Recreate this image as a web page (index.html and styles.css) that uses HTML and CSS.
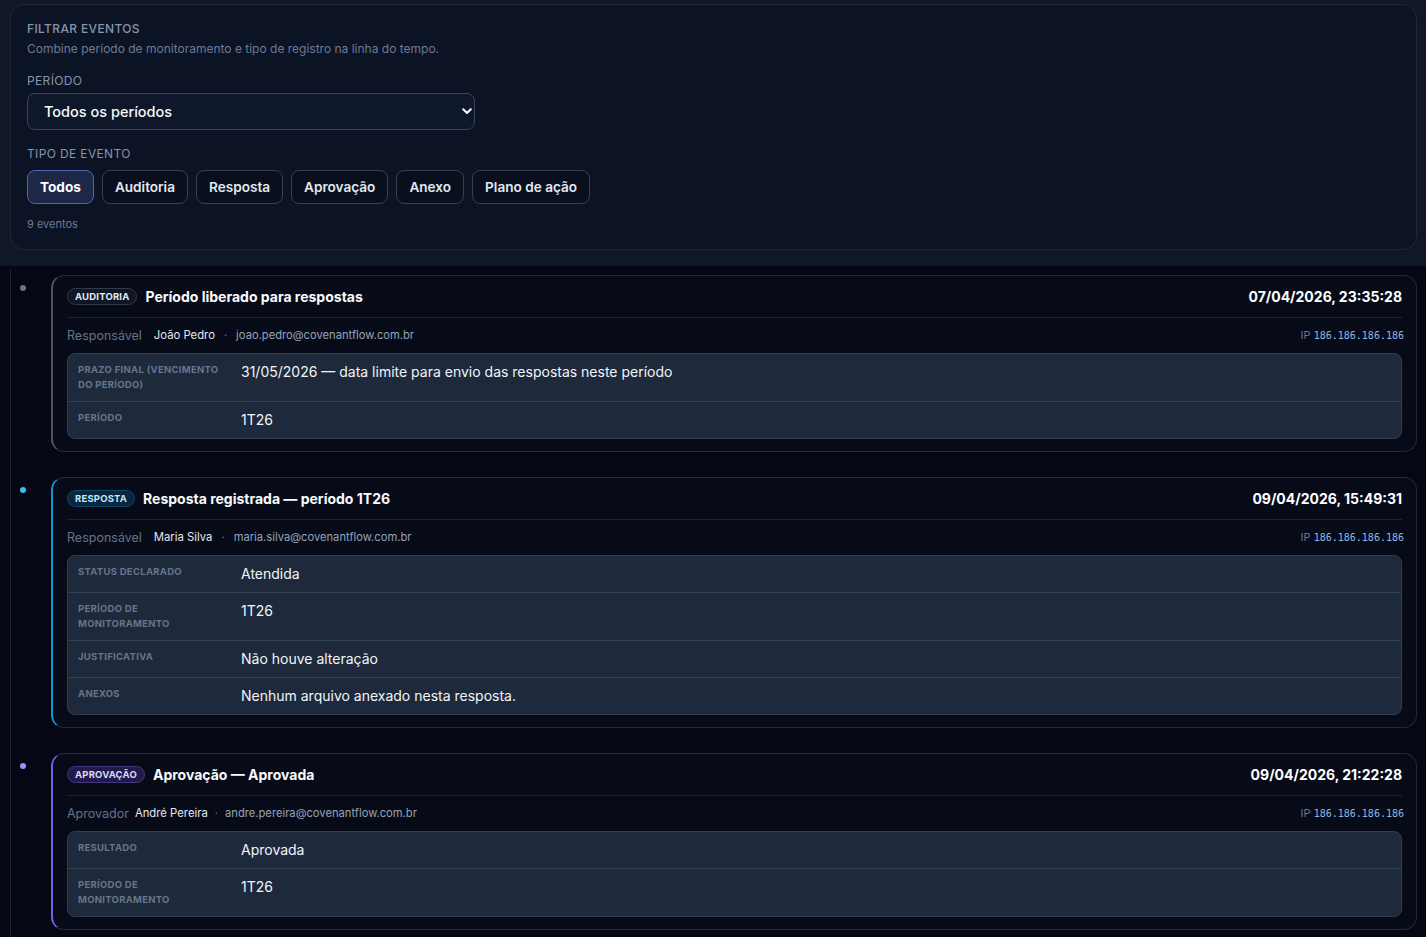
FILE: index.html
```html
<!DOCTYPE html>
<html lang="pt-BR">
<head>
<meta charset="utf-8">
<title>Linha do tempo</title>
<link rel="stylesheet" href="styles.css">
</head>
<body>
<header class="top">
  <section class="filters">
    <h2 class="f-title">Filtrar eventos</h2>
    <p class="f-sub">Combine período de monitoramento e tipo de registro na linha do tempo.</p>
    <label class="f-label">Período</label>
    <div class="select-wrap">
      <select class="select">
        <option>Todos os períodos</option>
      </select>
      <svg class="chev" width="10" height="7" viewBox="0 0 10 7"><path d="M1.2 1.3 L5 5 L8.8 1.3" fill="none" stroke="#ffffff" stroke-width="2" stroke-linecap="round" stroke-linejoin="round"/></svg>
    </div>
    <div class="f-label f-label2">Tipo de evento</div>
    <div class="chips">
      <button class="chip active">Todos</button>
      <button class="chip">Auditoria</button>
      <button class="chip">Resposta</button>
      <button class="chip">Aprovação</button>
      <button class="chip">Anexo</button>
      <button class="chip">Plano de ação</button>
    </div>
    <div class="count">9 eventos</div>
  </section>
</header>

<main class="timeline">
  <article class="card c-audit">
    <span class="dot"></span>
    <div class="card-head">
      <div class="head-left">
        <span class="badge b-audit">AUDITORIA</span>
        <h3 class="title">Período liberado para respostas</h3>
      </div>
      <div class="stamp">07/04/2026, 23:35:28</div>
    </div>
    <div class="meta">
      <div class="meta-left">
        <span class="m-label">Responsável</span>
        <span class="m-name">João Pedro</span>
        <span class="m-sep">·</span>
        <span class="m-mail">joao.pedro@covenantflow.com.br</span>
      </div>
      <div class="ip"><span class="ip-l">IP</span> <span class="ip-v">186.186.186.186</span></div>
    </div>
    <div class="details">
      <div class="row"><div class="k">Prazo final (vencimento do período)</div><div class="v">31/05/2026 — data limite para envio das respostas neste período</div></div>
      <div class="row"><div class="k">Período</div><div class="v">1T26</div></div>
    </div>
  </article>

  <article class="card c-resp">
    <span class="dot"></span>
    <div class="card-head">
      <div class="head-left">
        <span class="badge b-resp">RESPOSTA</span>
        <h3 class="title">Resposta registrada — período 1T26</h3>
      </div>
      <div class="stamp">09/04/2026, 15:49:31</div>
    </div>
    <div class="meta">
      <div class="meta-left">
        <span class="m-label">Responsável</span>
        <span class="m-name">Maria Silva</span>
        <span class="m-sep">·</span>
        <span class="m-mail">maria.silva@covenantflow.com.br</span>
      </div>
      <div class="ip"><span class="ip-l">IP</span> <span class="ip-v">186.186.186.186</span></div>
    </div>
    <div class="details">
      <div class="row"><div class="k">Status declarado</div><div class="v">Atendida</div></div>
      <div class="row"><div class="k">Período de monitoramento</div><div class="v">1T26</div></div>
      <div class="row"><div class="k">Justificativa</div><div class="v">Não houve alteração</div></div>
      <div class="row"><div class="k">Anexos</div><div class="v">Nenhum arquivo anexado nesta resposta.</div></div>
    </div>
  </article>

  <article class="card c-apr">
    <span class="dot"></span>
    <div class="card-head">
      <div class="head-left">
        <span class="badge b-apr">APROVAÇÃO</span>
        <h3 class="title">Aprovação — Aprovada</h3>
      </div>
      <div class="stamp">09/04/2026, 21:22:28</div>
    </div>
    <div class="meta">
      <div class="meta-left tight">
        <span class="m-label">Aprovador</span>
        <span class="m-name">André Pereira</span>
        <span class="m-sep">·</span>
        <span class="m-mail">andre.pereira@covenantflow.com.br</span>
      </div>
      <div class="ip"><span class="ip-l">IP</span> <span class="ip-v">186.186.186.186</span></div>
    </div>
    <div class="details">
      <div class="row"><div class="k">Resultado</div><div class="v">Aprovada</div></div>
      <div class="row"><div class="k">Período de monitoramento</div><div class="v">1T26</div></div>
    </div>
  </article>
</main>
</body>
</html>
```

FILE: styles.css
```css
* { box-sizing: border-box; }
html, body { margin: 0; padding: 0; }
body {
  background: #050814;
  font-family: Inter, "Noto Sans", sans-serif;
  color: #e2e8f0;
  height: 937px;
  overflow: hidden;
}

/* ---------- header / filters ---------- */
.top {
  background: #101726;
  padding: 4px 9px 16px 10px;
}
.filters {
  background: #0c1324;
  border: 1px solid #1e2838;
  border-radius: 14px;
  padding: 16px 16px 17px 16px;
}
.f-title {
  margin: 0;
  font-size: 12px;
  font-weight: 500;
  line-height: 16px;
  letter-spacing: 0.03em;
  text-transform: uppercase;
  color: #8595ae;
}
.f-sub {
  margin: 4px 0 0;
  font-size: 12px;
  line-height: 16px;
  color: #6b7c98;
}
.f-label {
  display: block;
  margin-top: 16px;
  font-size: 12px;
  line-height: 16px;
  letter-spacing: 0.03em;
  text-transform: uppercase;
  color: #8595ae;
}
.f-label2 { margin-top: 16px; }
.select-wrap {
  position: relative;
  width: 448px;
  margin-top: 4px;
}
.select {
  -webkit-appearance: none;
  appearance: none;
  display: block;
  width: 100%;
  height: 37px;
  background: #0f172a;
  border: 1px solid #3a4558;
  border-radius: 8px;
  color: #f8fafc;
  font-family: inherit;
  font-size: 14.5px;
  font-weight: 500;
  padding: 0 30px 0 16px;
}
.chev {
  position: absolute;
  right: 3px;
  top: 15px;
}
.chips {
  display: flex;
  gap: 8px;
  margin-top: 8px;
}
.chip {
  height: 34px;
  padding: 0 12px;
  border-radius: 8px;
  border: 1px solid #334155;
  background: #0a0f1d;
  color: #e2e8f0;
  font-family: inherit;
  font-size: 13.6px;
  font-weight: 600;
}
.chip.active {
  background: #1d2849;
  border-color: #5466a8;
  color: #ffffff;
  font-weight: 700;
}
.count {
  margin-top: 12px;
  font-size: 11px;
  line-height: 16px;
  color: #6b7c98;
}

/* ---------- timeline ---------- */
.timeline {
  margin: 4px 9px 0 10px;
  padding: 5px 0 30px 40px;
  border-left: 1px solid #1c2434;
  display: flex;
  flex-direction: column;
  gap: 25px;
}
.card {
  position: relative;
  background: #070b18;
  border: 1px solid #202a3a;
  border-left: 2px solid #4a5568;
  border-radius: 13px;
  padding: 11px 14px 12px 14px;
}
.c-resp { border-left-color: #1493d6; }
.c-apr { border-left-color: #7c5ce6; }
.dot {
  position: absolute;
  left: -33px;
  top: 9px;
  width: 6px;
  height: 6px;
  border-radius: 50%;
  background: #64748b;
}
.c-resp .dot { background: #38bdf8; }
.c-apr .dot { background: #a78bfa; }

.card-head {
  display: flex;
  justify-content: space-between;
  align-items: center;
  height: 31px;
  padding-bottom: 11px;
  border-bottom: 1px solid #1c2434;
}
.head-left {
  display: flex;
  align-items: center;
  gap: 8px;
}
.badge {
  display: inline-block;
  height: 17px;
  line-height: 15px;
  padding: 0 7px;
  border-radius: 9px;
  border: 1px solid #2e3a4e;
  background: #0f1626;
  font-size: 9.5px;
  font-weight: 700;
  letter-spacing: 0.02em;
  color: #e2e8f0;
}
.b-resp { background: #0a2640; border-color: #0f4669; color: #bde7fb; }
.b-apr { background: #221a48; border-color: #43357f; color: #ddd6fe; }
.title {
  margin: 0;
  font-size: 14px;
  font-weight: 700;
  line-height: 18px;
  color: #f8fafc;
}
.stamp {
  font-size: 14px;
  font-weight: 700;
  line-height: 18px;
  color: #ffffff;
}

.meta {
  display: flex;
  justify-content: space-between;
  align-items: center;
  margin: 8px -2px 9px 0;
  height: 18px;
}
.meta-left {
  display: flex;
  align-items: center;
  gap: 8px;
}
.meta-left.tight { gap: 6px; }
.m-label {
  font-size: 12.5px;
  color: #64748b;
}
.m-name {
  font-size: 11.3px;
  color: #e2e8f0;
  margin-left: 4px;
}
.tight .m-name { margin-left: 0; }
.m-sep {
  font-size: 11px;
  color: #64748b;
  margin: 0 1px;
}
.m-mail {
  font-size: 11.2px;
  color: #94a3b8;
}
.ip {
  font-size: 11px;
  color: #64748b;
}
.ip-v {
  font-family: "DejaVu Sans Mono", "Liberation Mono", monospace;
  font-size: 10px;
  color: #8fb6e6;
}

.details {
  background: #1e293b;
  border: 1px solid #313d50;
  border-radius: 8px;
}
.row {
  display: grid;
  grid-template-columns: 146px 1fr;
  column-gap: 17px;
  align-items: start;
  padding: 9px 10px;
  border-top: 1px solid #334155;
}
.row:first-child { border-top: 0; }
.k {
  font-size: 9.5px;
  font-weight: 700;
  line-height: 14.5px;
  letter-spacing: 0.03em;
  text-transform: uppercase;
  color: #66758d;
}
.v {
  font-size: 14px;
  line-height: 18px;
  color: #f1f5f9;
}
```
